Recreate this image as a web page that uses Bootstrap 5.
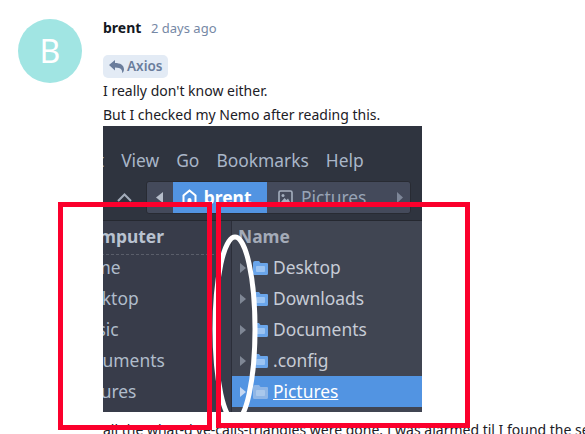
<!DOCTYPE html>
<html lang="en">
<head>
  <meta charset="UTF-8" />
  <title>Comment</title>
  <link href="https://cdn.jsdelivr.net/npm/bootstrap@5.3.0/dist/css/bootstrap.min.css" rel="stylesheet">
  <style>
    html, body { height: 434px; overflow: hidden; }
    body {
      font-family: "Noto Sans", sans-serif;
      font-size: 14px;
      line-height: 24px;
      color: #1c2026;
      background: #fff;
    }
    .post { padding: 19px 0 0 18px; }
    .avatar {
      width: 64px; height: 64px;
      background: #a1e5e3;
      color: #fff;
      font-size: 32px;
      line-height: 64px;
    }
    .post-body { margin-left: 21px; width: 482px; flex: none; }
    .post-head { height: 36px; line-height: 18px; }
    .author { font-weight: 700; font-size: 14px; color: #14181f; }
    .age { font-size: 13px; color: #7688a5; margin-left: 6px; }
    .reply-chip {
      width: fit-content;
      background: #e3ebf5;
      color: #6a7d9c;
      font-weight: 600;
      font-size: 13.5px;
      line-height: 23px;
      height: 23px;
      padding: 0 6px;
      border-radius: 5px;
      gap: 3px;
      margin-bottom: 1px;
    }
    .post-text { white-space: nowrap; }
    .shot {
      width: 319px; height: 286px;
      margin-top: -1px;
      margin-bottom: 6px;
      background: #404552;
      font-size: 17.4px;
      line-height: 31px;
      color: #b0bccb;
      overflow: hidden;
    }
    .shot-top { height: 95px; background: #2f343f; border-bottom: 1px solid #252830; }
    .shot-menu { height: 55px; padding: 19px 0 0 0; margin-left: -30px; gap: 17px; line-height: 31px; color: #a9b6c8; }
    .shot-tools { height: 33px; }
    .shot-up { width: 43px; }
    .path-bar {
      width: 265px; height: 33px;
      background: #444a5b;
      border: 1px solid #282b33;
      border-radius: 3px;
      overflow: hidden;
      line-height: 31px;
    }
    .path-back { width: 26px; }
    .path-home { width: 95px; background: #5294e2; color: #fff; font-weight: 700; gap: 7px; padding-left: 9px; }
    .path-pics { width: 144px; color: #98a4b6; padding: 0 7px 0 11px; gap: 8px; }
    .shot-main { height: 191px; }
    .shot-side { width: 129px; background: #383c4a; border-right: 1px solid #2b2e39; overflow: hidden; flex: none; }
    .side-list { margin-left: -32px; white-space: nowrap; }
    .side-head { font-weight: 700; color: #b9c2d0; height: 33px; padding-left: 6px; }
    .side-rule { border-top: 1px dashed #5a5e6a; width: 143px; margin-bottom: -3px; }
    .file-list { flex-grow: 1; }
    .file-head { font-weight: 700; color: #a4abb8; height: 31px; padding-left: 6px; }
    .file-row { height: 31px; padding-left: 8px; gap: 7px; color: #c7ccd6; }
    .file-row.picked { background: #5294e2; color: #fff; text-decoration: underline; }
    .file-name { margin-left: -2px; }
    .mark-ring { left: 0; top: 0; pointer-events: none; }
    .red-box { border: 5px solid #fb002c; pointer-events: none; }
    .red-one { left: 58px; top: 202px; width: 154px; height: 228px; }
    .red-two { left: 216px; top: 202px; width: 254px; height: 226px; }
  </style>
</head>
<body>

  <div class="post d-flex align-items-start">
    <div class="avatar rounded-circle text-center flex-shrink-0">B</div>
    <div class="post-body">
      <div class="post-head"><span class="author">brent</span> <span class="age">2 days ago</span></div>
      <div class="reply-chip d-flex align-items-center">
        <svg width="15" height="13" viewBox="0 0 15 13"><path fill="#6a7d9c" d="M0 5 L6 0 V3 C11 3 15 5 15 9.500 C15 11 14 12.500 13 13 C13.500 10.500 12.500 7.500 6 7.500 V10.500 Z"/></svg>
        Axios
      </div>
      <div class="post-text">I really don't know either.</div>
      <div class="post-text">But I checked my Nemo after reading this.</div>

      <div class="shot position-relative">
        <div class="shot-top">
          <div class="shot-menu d-flex">
            <span>Edit</span><span>View</span><span>Go</span><span>Bookmarks</span><span>Help</span>
          </div>
          <div class="shot-tools d-flex">
            <div class="shot-up d-flex align-items-center justify-content-center">
              <svg width="15" height="9" viewBox="0 0 15 9"><path fill="none" stroke="#a2abb9" stroke-width="2" d="M1 8 L7.500 1.500 L14 8"/></svg>
            </div>
            <div class="path-bar d-flex">
              <div class="path-back d-flex align-items-center justify-content-center">
                <svg width="7" height="11" viewBox="0 0 7 11"><path fill="#b5bdca" d="M7 0 V11 L0 5.500 Z"/></svg>
              </div>
              <div class="path-home d-flex align-items-center">
                <svg width="15" height="17" viewBox="0 0 15 17" class="flex-shrink-0"><path fill="none" stroke="#fff" stroke-width="2" d="M1.500 16 V6.500 L7.500 1.500 L13.500 6.500 V16 Z"/><rect x="5.500" y="9" width="4" height="7" rx="2" fill="#fff"/></svg>
                brent
              </div>
              <div class="path-pics d-flex align-items-center">
                <svg width="15" height="15" viewBox="0 0 15 15"><rect x="1" y="1" width="13" height="13" rx="1.500" fill="none" stroke="#a5afbf" stroke-width="1.600"/><circle cx="5" cy="5.500" r="1.500" fill="#a5afbf"/><path fill="#a5afbf" d="M3 12 L6.500 8 L8.500 10 L10 8.500 L12 12 Z"/></svg>
                <span class="flex-grow-1">Pictures</span>
                <svg width="6" height="11" viewBox="0 0 6 11"><path fill="#7d8698" d="M0 0 V11 L6 5.500 Z"/></svg>
              </div>
            </div>
          </div>
        </div>
        <div class="shot-main d-flex">
          <div class="shot-side">
            <div class="side-list">
              <div class="side-head">Computer</div>
              <div class="side-rule"></div>
              <div>Home</div>
              <div>Desktop</div>
              <div>Music</div>
              <div>Documents</div>
              <div>Pictures</div>
            </div>
          </div>
          <div class="file-list">
            <div class="file-head">Name</div>
            <div class="file-row d-flex align-items-center" id="row-desktop"></div>
            <div class="file-row d-flex align-items-center" id="row-downloads"></div>
            <div class="file-row d-flex align-items-center" id="row-documents"></div>
            <div class="file-row d-flex align-items-center" id="row-config"></div>
            <div class="file-row picked d-flex align-items-center" id="row-pictures"></div>
          </div>
        </div>
        <svg class="mark-ring position-absolute" width="319" height="286" viewBox="0 0 319 286">
          <ellipse cx="132" cy="203" rx="20" ry="92" fill="none" stroke="#fff" stroke-width="5"/>
        </svg>
      </div>

      <div class="post-text">all the what-d'ye-calls-triangles were gone. I was alarmed til I found the setting</div>
    </div>
  </div>

  <div class="red-box red-one position-absolute"></div>
  <div class="red-box red-two position-absolute"></div>

  <script>
    // file rows in the picture
    const rows = [
      ["row-desktop", "Desktop", "#6aa5ea", "#9cc4f2"],
      ["row-downloads", "Downloads", "#6aa5ea", "#9cc4f2"],
      ["row-documents", "Documents", "#6aa5ea", "#9cc4f2"],
      ["row-config", ".config", "#6aa5ea", "#9cc4f2"],
      ["row-pictures", "Pictures", "#8fb6e6", "#a9c8ec"]
    ];
    rows.forEach(r => {
      const tri = r[0] === "row-pictures" ? "#c5d8f2" : "#7f8795";
      document.getElementById(r[0]).innerHTML =
        `<svg width="6" height="10" viewBox="0 0 6 10"><path fill="${tri}" d="M0 0 V10 L6 5 Z"/></svg>` +
        `<svg width="15" height="14" viewBox="0 0 15 14"><path fill="${r[2]}" d="M0 2 Q0 0 2 0 H6 L7.500 2 H14 Q15 2 15 3 V12.500 Q15 14 13.500 14 H1.500 Q0 14 0 12.500 Z"/><rect x="3" y="5" width="9" height="6" rx="1" fill="${r[3]}"/></svg>` +
        `<span class="file-name">${r[1]}</span>`;
    });
  </script>

</body>
</html>
